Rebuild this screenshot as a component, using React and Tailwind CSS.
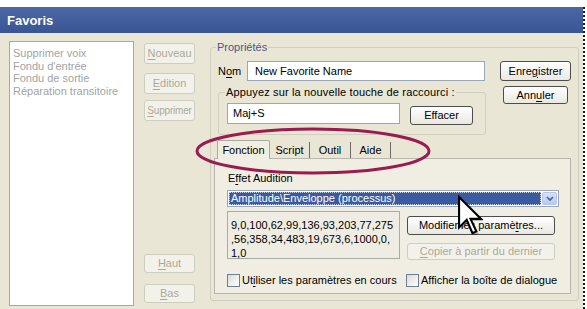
import React from "react";

const U = ({ children }) => <span className="underline underline-offset-[2px]">{children}</span>;

const DisBtn = ({ children, className = "" }) => (
  <div className={`flex items-center justify-center border border-[#cfcdbf] rounded-[3px] bg-[#f3f2ea] text-[#aca899] ${className}`}>
    {children}
  </div>
);

const Btn = ({ children, className = "" }) => (
  <div className={`flex items-center justify-center border border-[#4d4d4d] rounded-[3px] bg-gradient-to-b from-white to-[#e9e8e1] text-black ${className}`}>
    {children}
  </div>
);

const Check = () => (
  <div className="w-[13px] h-[13px] border border-[#6f7f98] bg-gradient-to-br from-[#dcdcd5] to-white" />
);

export default function App() {
  return (
    <div className="relative w-[587px] h-[309px] bg-white overflow-hidden text-[11px] leading-[13px] text-black font-['Liberation_Sans',Arial,sans-serif]">
      <div className="h-[7px]" />
      <div className="flex">
        <div className="w-[583px] flex flex-col">
          {/* title bar */}
          <div className="h-[26px] bg-gradient-to-b from-[#4b67a5] to-[#3a5594] flex items-center pl-[7px] text-white font-bold text-[13px]">
            Favoris
          </div>
          {/* body */}
          <div className="h-[276px] bg-[#e9e6d5] flex">
            {/* list */}
            <div className="ml-[9px] mt-[8px] w-[125px] h-[265px] border border-[#a3a8ae] bg-white pl-[3px] pt-[5px] text-[#a3a3a3] leading-[12.5px]">
              <div>Supprimer voix</div>
              <div>Fondu d'entrée</div>
              <div>Fondu de sortie</div>
              <div>Réparation transitoire</div>
            </div>
            {/* left buttons */}
            <div className="ml-[10px] w-[51px] flex flex-col">
              <DisBtn className="mt-[10px] h-[21px]"><span><U>N</U>ouveau</span></DisBtn>
              <DisBtn className="mt-[9px] h-[21px]"><span><U>E</U>dition</span></DisBtn>
              <DisBtn className="mt-[6px] h-[21px] text-[10px] tracking-[-0.2px]"><span><U>S</U>upprimer</span></DisBtn>
              <div className="flex-1" />
              <DisBtn className="h-[19px]"><span><U>H</U>aut</span></DisBtn>
              <DisBtn className="mt-[11px] mb-[6px] h-[19px]"><span><U>B</U>as</span></DisBtn>
            </div>
            {/* properties group */}
            <div className="relative ml-[15px] mt-[14px] w-[369px] h-[254px] border border-[#d0cebf] rounded-[3px] flex flex-col">
              <div className="absolute left-[5px] -top-[7px] px-[1px] bg-[#e9e6d5] text-[#4a5884]">Propriétés</div>
              <div className="flex pl-[7px] pt-[13px]">
                <div className="w-[268px] flex flex-col">
                  <div className="flex items-center h-[20px]">
                    <div className="w-[29px]">N<U>o</U>m</div>
                    <div className="w-[238px] h-[20px] border border-[#9aa7ba] bg-white flex items-center pl-[7px]">New Favorite Name</div>
                  </div>
                  <div className="relative mt-[11px] h-[43px] border border-[#d0cebf] rounded-[3px] flex items-start pl-[8px] pt-[10px]">
                    <div className="absolute left-[6px] -top-[7px] px-[1px] bg-[#e9e6d5] tracking-[0.15px]">Appuyez sur la nouvelle touche de raccourci :</div>
                    <div className="w-[173px] h-[21px] border border-[#9aa7ba] bg-white flex items-center pl-[5px]">Maj+S</div>
                    <Btn className="ml-[10px] mt-[3px] w-[63px] h-[19px]">Effacer</Btn>
                  </div>
                </div>
                <div className="ml-[14px] w-[71px] flex flex-col">
                  <Btn className="h-[20px]"><span>Enre<U>g</U>istrer</span></Btn>
                  <Btn className="mt-[5px] mx-auto w-[65px] h-[18px]"><span>Ann<U>u</U>ler</span></Btn>
                </div>
              </div>
              {/* tabs */}
              <div className="ml-[3px] mt-[5px] flex flex-col w-[357px]">
                <div className="flex items-end h-[19px] pl-[3px] relative z-10">
                  <div className="w-[53px] h-[19px] border border-b-0 border-[#a7aaa3] rounded-t-[2px] bg-[#f0eee3] flex items-center justify-center">Fonction</div>
                  <div className="w-[40px] h-[16px] mb-[1px] border-r border-[#6b6b6b] flex items-center justify-center">Script</div>
                  <div className="w-[41px] h-[16px] mb-[1px] border-r border-[#6b6b6b] flex items-center justify-center">Outil</div>
                  <div className="w-[40px] h-[16px] mb-[1px] border-r border-[#6b6b6b] flex items-center justify-center">Aide</div>
                </div>
                <div className="-mt-[1px] h-[136px] border border-[#b9b7ab] bg-[#f0eee3] flex flex-col pl-[12px] pr-[10px]">
                  <div className="mt-[13px] ml-[1px]">E<U>f</U>fet Audition</div>
                  <div className="mt-[5px] h-[17px] w-[332px] border border-[#9aa7ba] bg-white flex items-stretch p-[1px]">
                    <div className="flex-1 bg-[#3a5aa2] text-white border border-dotted border-[#c8d0e0] flex items-center pl-[1px]">Amplitude\Enveloppe (processus)</div>
                    <div className="w-[15px] ml-[1px] bg-gradient-to-b from-[#d6e2fb] to-[#b8cbf3] border border-[#b3c5ec] rounded-[2px] flex items-center justify-center">
                      <svg width="8" height="6" viewBox="0 0 8 6"><path d="M1 1 L4 4 L7 1" fill="none" stroke="#4d6185" strokeWidth="1.6" /></svg>
                    </div>
                  </div>
                  <div className="flex mt-[4px]">
                    <div className="w-[173px] h-[48px] border border-[#a9aca6] bg-[#efede3] pl-[3px] pt-[6px] leading-[14px]">
                      <div>9,0,100,62,99,136,93,203,77,275</div>
                      <div>,56,358,34,483,19,673,6,1000,0,</div>
                      <div>1,0</div>
                    </div>
                    <div className="ml-[7px] w-[148px] flex flex-col">
                      <Btn className="mt-[5px] h-[19px]"><span>Modifier les paramè<U>t</U>res...</span></Btn>
                      <DisBtn className="mt-[8px] h-[17px]"><span><U>C</U>opier à partir du dernier</span></DisBtn>
                    </div>
                  </div>
                  <div className="flex items-center mt-[14px]">
                    <div className="w-[179px] flex items-center gap-[2px]">
                      <Check />
                      <span>Ut<U>i</U>liser les paramètres en cours</span>
                    </div>
                    <div className="flex items-center gap-[2px]">
                      <Check />
                      <span>Afficher la boîte de dialogue</span>
                    </div>
                  </div>
                </div>
              </div>
            </div>
          </div>
        </div>
        <div className="w-[2px] h-[302px] border-l-2 border-dotted border-[#1a1a1a]" />
      </div>

      {/* annotation ellipse */}
      <svg className="absolute left-[194px] top-[126px]" width="240" height="50" viewBox="0 0 240 50">
        <ellipse cx="119" cy="25" rx="116" ry="22" fill="none" stroke="#9c1b4f" strokeWidth="3" />
      </svg>

      {/* mouse cursor */}
      <svg className="absolute left-[457px] top-[195px]" width="29" height="44" viewBox="0 0 15 23">
        <path d="M2.2 2.2 L2.2 18.2 L6.2 14.2 L9.2 21.2 L11.2 20.2 L8.2 13.7 L13.7 13.7 Z" fill="#000" opacity="0.25" />
        <path d="M1 1 L1 17 L5 13 L8 20 L10 19 L7 12.5 L12.5 12.5 Z" fill="#fff" stroke="#000" strokeWidth="1.1" strokeLinejoin="miter" />
      </svg>
    </div>
  );
}
